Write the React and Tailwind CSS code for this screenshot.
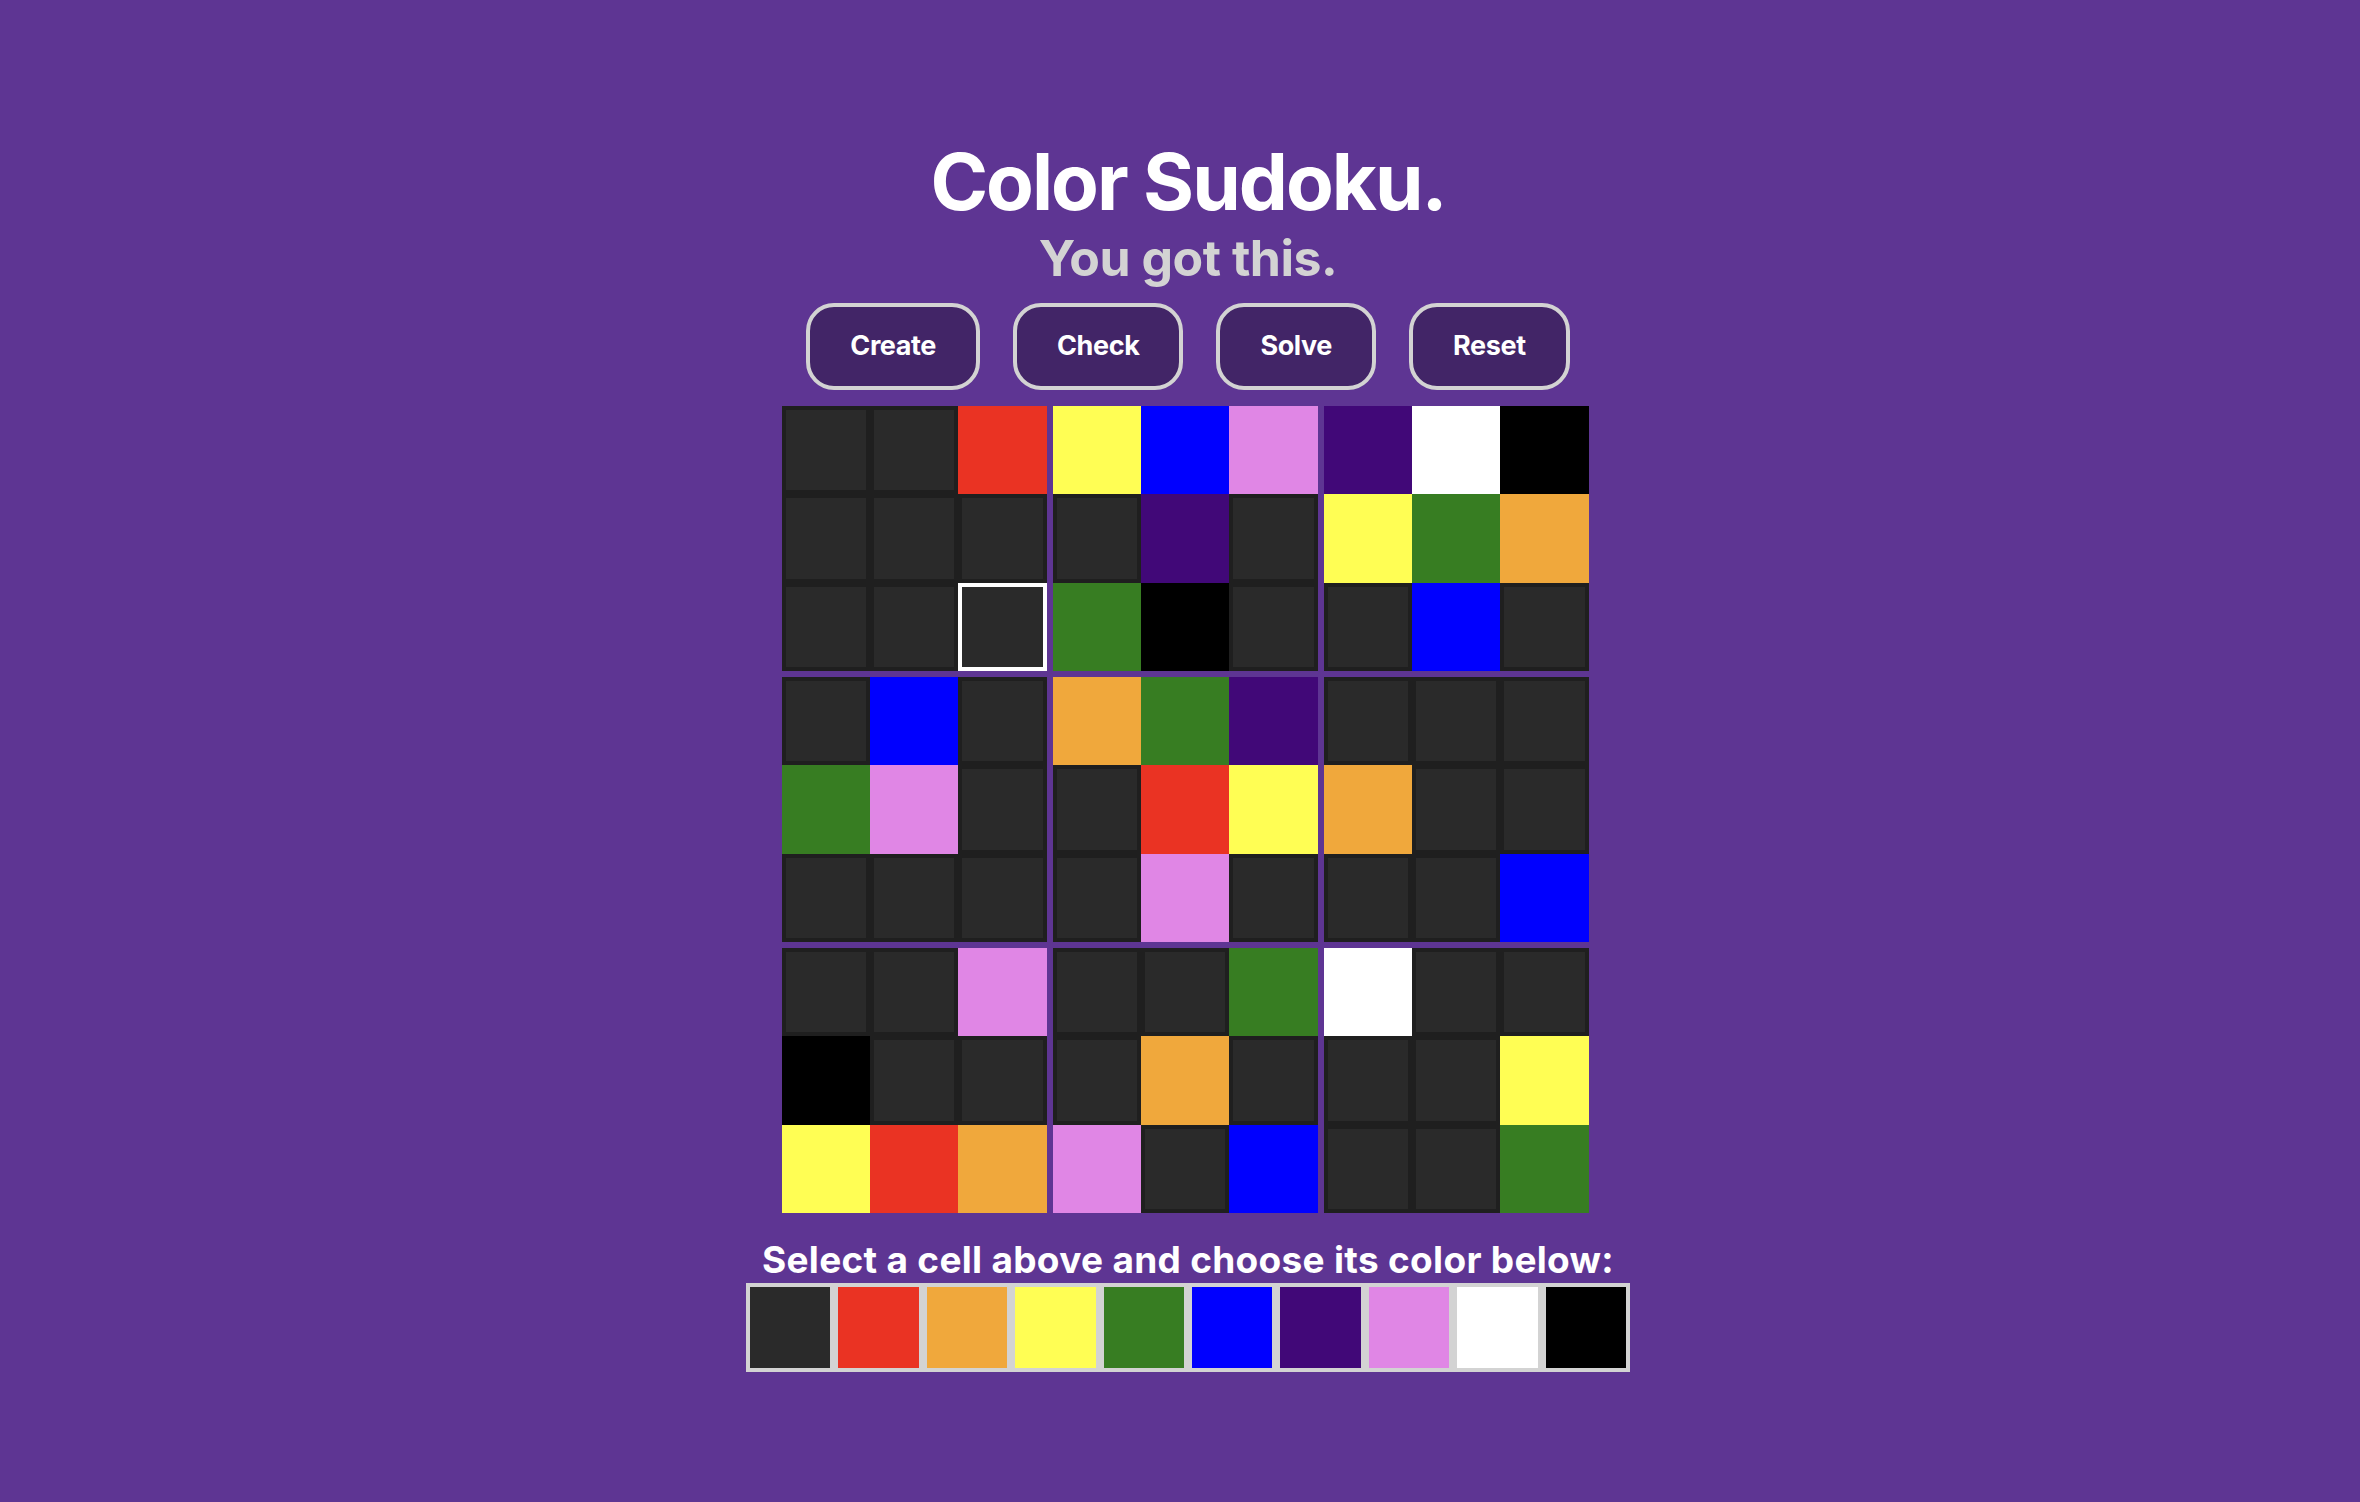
import React, { useState } from 'react';

const COLORS = {
  _: '#2a2a2a',
  R: '#ea3323',
  O: '#f0a83c',
  Y: '#fffe54',
  G: '#377d22',
  B: '#0000ff',
  I: '#410878',
  P: '#e086e5',
  W: '#ffffff',
  K: '#000000',
};

const PALETTE = ['_', 'R', 'O', 'Y', 'G', 'B', 'I', 'P', 'W', 'K'];

const BOARD = [
  '__RYBPIWK',
  '____I_YGO',
  '___GK__B_',
  '_B_OGI___',
  'GP__RYO__',
  '____P___B',
  '__P__GW__',
  'K___O___Y',
  'YROP_B__G',
];

function Cell({ value, selected, onClick }) {
  const bg = COLORS[value];
  const border = selected ? '#ffffff' : value === '_' ? '#1f1f1f' : bg;
  return (
    <div
      onClick={onClick}
      className="border-4 cursor-pointer"
      style={{ backgroundColor: bg, borderColor: border }}
    />
  );
}

export default function App() {
  const [board, setBoard] = useState(BOARD.map((row) => row.split('')));
  const [selected, setSelected] = useState([2, 2]);

  const pick = (c) => {
    const next = board.map((r) => [...r]);
    next[selected[0]][selected[1]] = c;
    setBoard(next);
  };

  const boxes = [];
  for (let br = 0; br < 3; br++) {
    for (let bc = 0; bc < 3; bc++) {
      const cells = [];
      for (let r = br * 3; r < br * 3 + 3; r++) {
        for (let c = bc * 3; c < bc * 3 + 3; c++) {
          cells.push(
            <Cell
              key={`${r}-${c}`}
              value={board[r][c]}
              selected={selected[0] === r && selected[1] === c}
              onClick={() => setSelected([r, c])}
            />
          );
        }
      }
      boxes.push(
        <div key={`${br}-${bc}`} className="grid grid-cols-3 grid-rows-3 w-[265px] h-[265px]">
          {cells}
        </div>
      );
    }
  }

  return (
    <div
      className="min-h-screen bg-[#5e3593] pl-[16px] flex flex-col items-center text-white"
      style={{ fontFamily: 'Inter, "Noto Sans", sans-serif' }}
    >
      <h1 className="mt-[143px] text-[78px] leading-[78px] font-bold tracking-[-2px]">Color Sudoku.</h1>
      <h2 className="mt-[12px] text-[50px] leading-[50px] font-bold text-[#d3d3d3] tracking-[-0.5px]">You got this.</h2>

      <div className="mt-[20px] flex gap-[33px]">
        {['Create', 'Check', 'Solve', 'Reset'].map((label) => (
          <button
            key={label}
            className="h-[87px] px-[40px] rounded-[28px] border-4 border-[#d3d3d3] bg-[#422567] text-[27px] font-bold text-white tracking-[-0.4px]"
          >
            {label}
          </button>
        ))}
      </div>

      <div className="mt-[16px] grid grid-cols-3 gap-[6px] pr-[6px]">{boxes}</div>

      <p className="mt-[28px] text-[37px] leading-[37px] font-bold tracking-[0.3px]">Select a cell above and choose its color below:</p>

      <div className="mt-[5px] flex gap-[8px] p-[4px] bg-[#d3d3d3]">
        {PALETTE.map((c) => (
          <div
            key={c}
            onClick={() => pick(c)}
            className="w-[80.4px] h-[81px] cursor-pointer"
            style={{ backgroundColor: COLORS[c] }}
          />
        ))}
      </div>
    </div>
  );
}
